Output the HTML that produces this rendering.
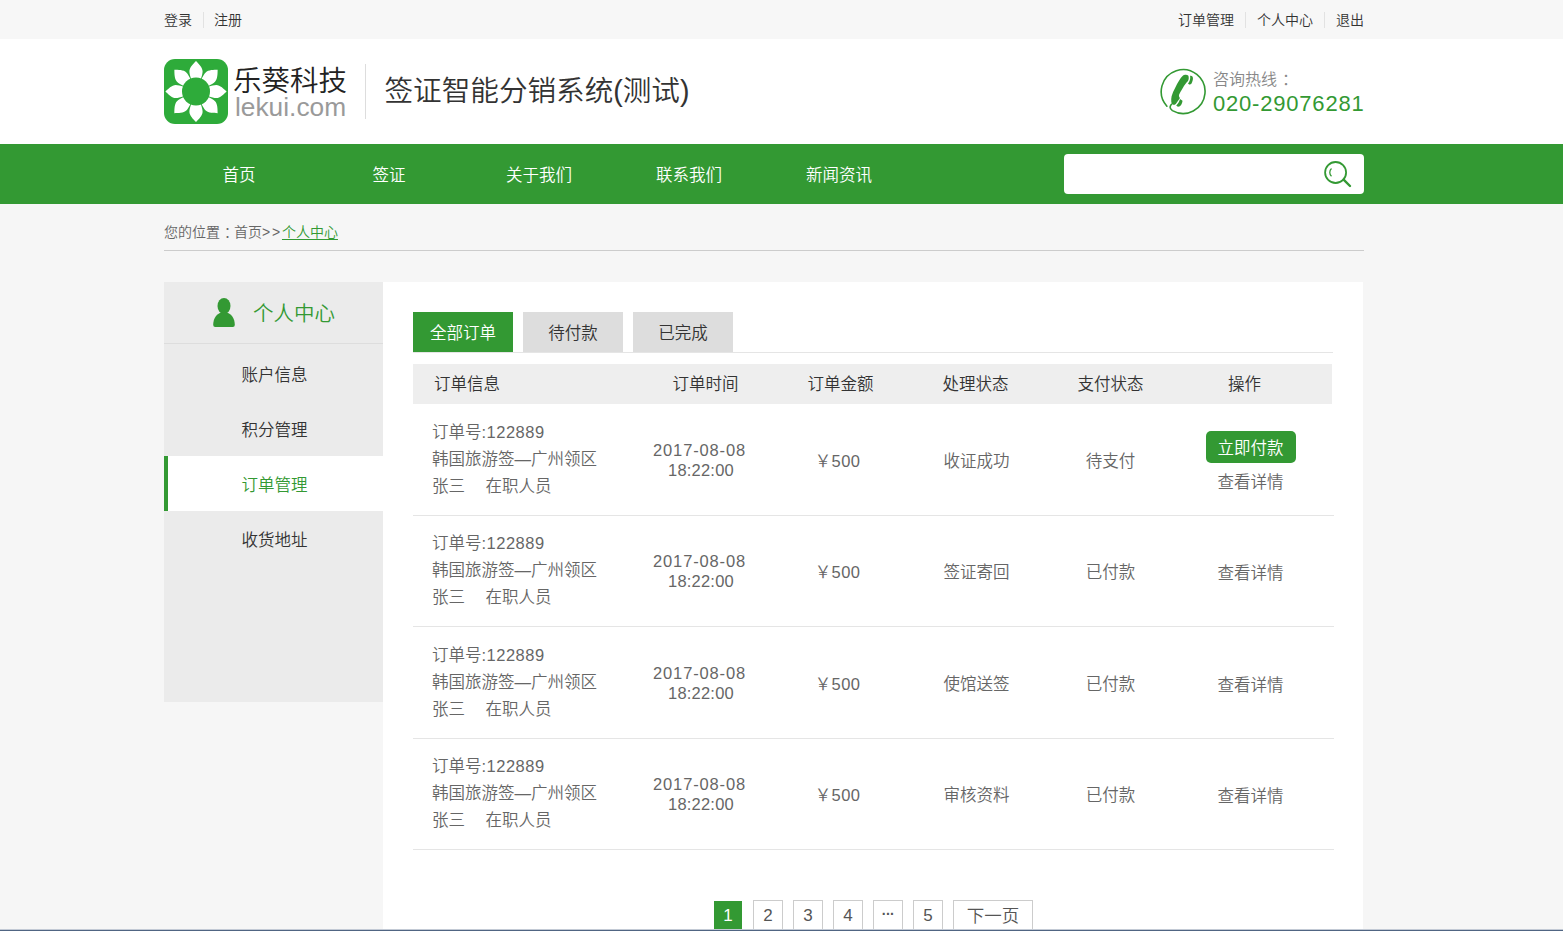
<!DOCTYPE html>
<html lang="zh-CN">
<head>
<meta charset="utf-8">
<title>个人中心 - 订单管理</title>
<style>
*{margin:0;padding:0;box-sizing:border-box;}
html,body{width:1563px;height:931px;overflow:hidden;}
body{background:#f6f6f6;font-family:"Liberation Sans","Noto Sans CJK SC",sans-serif;color:#333;position:relative;font-weight:350;}
a{text-decoration:none;color:inherit;}
ul{list-style:none;}
.wrap{width:1200px;margin-left:164px;position:relative;}
/* top bar */
.topbar{height:39px;background:#f7f7f7;font-size:14px;line-height:41px;color:#333;overflow:hidden;}
.topbar .l{position:absolute;left:0;top:0;}
.topbar .r{position:absolute;right:0;top:0;}
.topbar span.sep{display:inline-block;width:1px;height:16px;background:#e2e2e2;vertical-align:-3px;margin:0 11px;}
/* header */
.header{height:105px;background:#fff;}
.header .wrap{height:105px;}
.logo{position:absolute;left:0;top:20px;width:64px;height:65px;}
.brand{position:absolute;left:69px;top:26px;font-size:28.5px;line-height:32px;color:#222;white-space:nowrap;}
.brand2{position:absolute;left:71px;top:53px;font-size:26.3px;line-height:30px;color:#9a9a9a;white-space:nowrap;}
.hsep{position:absolute;left:201px;top:25px;width:1px;height:55px;background:#ddd;}
.sysname{position:absolute;left:220.5px;top:32px;font-size:28.6px;line-height:40px;color:#333;white-space:nowrap;}
.tel-ico{position:absolute;left:995px;top:29px;width:48px;height:48px;}
.tel-t{position:absolute;left:1049px;top:31px;font-size:16px;line-height:20px;color:#888;white-space:nowrap;}
.tel-n{position:absolute;left:1049px;top:50px;font-size:22px;letter-spacing:.8px;line-height:30px;color:#393;white-space:nowrap;}
/* nav */
.nav{height:60px;background:#393;}
.nav .wrap{height:60px;}
.nav ul li{float:left;width:150px;height:60px;line-height:62px;text-align:center;color:#fff;font-size:16.5px;}
.search{position:absolute;left:900px;top:10px;width:300px;height:40px;background:#fff;border-radius:4px;}
.search svg{position:absolute;left:258px;top:6px;}
/* crumb */
.crumb{height:47px;border-bottom:1px solid #ccc;font-size:14px;line-height:57px;color:#666;}
.crumb i{font-style:normal;letter-spacing:1.8px;}
.crumb a{color:#393;text-decoration:underline;text-underline-offset:2px;}
.crumb u{text-decoration:none;position:relative;left:4px;}
/* content */
.content{position:absolute;left:164px;top:282px;width:1200px;}
.side{position:absolute;left:0;top:0;width:219px;height:420px;background:#ebebeb;}
.side h3{height:62px;border-bottom:1px solid #ddd;font-weight:350;font-size:20.5px;line-height:64px;color:#393;padding-left:89px;overflow:hidden;position:relative;}
.side h3 svg{position:absolute;left:48px;top:16px;}
.side ul{margin-top:2px;}
.side li{height:55px;line-height:58px;overflow:hidden;font-size:16.5px;color:#333;padding-left:77.5px;}
.side li.on{background:#fff;color:#393;border-left:4px solid #393;padding-left:73.5px;}
.main{position:absolute;left:219px;top:0;width:980px;height:700px;background:#fff;}
.tabs{position:absolute;left:30px;top:30px;width:920px;height:41px;border-bottom:1px solid #e5e5e5;}
.tabs a{float:left;width:100px;height:40px;line-height:43px;overflow:hidden;text-align:center;font-size:16.5px;color:#333;background:#ddd;margin-right:10px;}
.tabs a.on{background:#393;color:#fff;}
.thead{position:absolute;left:30px;top:82px;width:919px;height:40px;background:#eee;font-size:16.5px;line-height:41px;color:#333;overflow:hidden;}
.thead span{position:absolute;top:0;text-align:center;}
.row{position:absolute;left:30px;width:921px;height:112px;border-bottom:1px solid #e5e5e5;font-size:16.5px;color:#666;}
.row .c{position:absolute;text-align:center;white-space:nowrap;}
.row .info{position:absolute;left:19px;top:15px;font-size:16.5px;line-height:27px;white-space:nowrap;}
.row .info b{font-weight:normal;letter-spacing:.5px;}
.row .dt{letter-spacing:.85px;font-size:16.5px;}
.row .yen{letter-spacing:.4px;}
.row .tm{letter-spacing:.2px;margin-left:3px;}
.row .info i{font-style:normal;display:inline-block;width:20.5px;}
.btn{display:inline-block;width:90px;height:32px;line-height:34px;overflow:hidden;vertical-align:top;background:#393;color:#fff;border-radius:5px;font-size:16.5px;}
.pager{position:absolute;left:330px;top:618px;height:30px;white-space:nowrap;font-size:0;}
.pager a{display:inline-block;height:30px;min-width:30px;line-height:30px;overflow:hidden;border:1px solid #ccc;text-align:center;font-size:17px;color:#555;margin-right:10px;background:#fff;vertical-align:top;}
.pager a.on{background:#393;border-color:#fff;color:#fff;}
.pager a.dots{font-size:14px;font-weight:bold;line-height:27px;letter-spacing:-.5px;}
.pager a.nx{width:80px;font-size:17.5px;}
.botline{position:absolute;left:0;top:929px;width:1563px;height:2px;background:#506583;border-top:1px solid #c3cad5;}
</style>
</head>
<body>
<div class="topbar"><div class="wrap">
  <div class="l"><a>登录</a><span class="sep" style="margin:0 10px 0 11px;"></span><a>注册</a></div>
  <div class="r"><a>订单管理</a><span class="sep"></span><a>个人中心</a><span class="sep"></span><a>退出</a></div>
</div></div>
<div class="header"><div class="wrap">
  <svg class="logo" viewBox="0 0 64 65">
    <rect x="0" y="0" width="64" height="65" rx="11" ry="11" fill="#2eab3a"/>
    <g fill="#fff" transform="translate(32,32.5)">
      <path transform="rotate(0)" d="M0,-30.6 C2.5,-28 6.6,-24 6.6,-20.3 C6.6,-18 5.8,-15.5 4.8,-12.5 L-4.8,-12.5 C-5.8,-15.5 -6.6,-18 -6.6,-20.3 C-6.6,-24 -2.5,-28 0,-30.6Z"/>
      <path transform="rotate(45)" d="M0,-30.6 C2.5,-28 6.6,-24 6.6,-20.3 C6.6,-18 5.8,-15.5 4.8,-12.5 L-4.8,-12.5 C-5.8,-15.5 -6.6,-18 -6.6,-20.3 C-6.6,-24 -2.5,-28 0,-30.6Z"/>
      <path transform="rotate(90)" d="M0,-30.6 C2.5,-28 6.6,-24 6.6,-20.3 C6.6,-18 5.8,-15.5 4.8,-12.5 L-4.8,-12.5 C-5.8,-15.5 -6.6,-18 -6.6,-20.3 C-6.6,-24 -2.5,-28 0,-30.6Z"/>
      <path transform="rotate(135)" d="M0,-30.6 C2.5,-28 6.6,-24 6.6,-20.3 C6.6,-18 5.8,-15.5 4.8,-12.5 L-4.8,-12.5 C-5.8,-15.5 -6.6,-18 -6.6,-20.3 C-6.6,-24 -2.5,-28 0,-30.6Z"/>
      <path transform="rotate(180)" d="M0,-30.6 C2.5,-28 6.6,-24 6.6,-20.3 C6.6,-18 5.8,-15.5 4.8,-12.5 L-4.8,-12.5 C-5.8,-15.5 -6.6,-18 -6.6,-20.3 C-6.6,-24 -2.5,-28 0,-30.6Z"/>
      <path transform="rotate(225)" d="M0,-30.6 C2.5,-28 6.6,-24 6.6,-20.3 C6.6,-18 5.8,-15.5 4.8,-12.5 L-4.8,-12.5 C-5.8,-15.5 -6.6,-18 -6.6,-20.3 C-6.6,-24 -2.5,-28 0,-30.6Z"/>
      <path transform="rotate(270)" d="M0,-30.6 C2.5,-28 6.6,-24 6.6,-20.3 C6.6,-18 5.8,-15.5 4.8,-12.5 L-4.8,-12.5 C-5.8,-15.5 -6.6,-18 -6.6,-20.3 C-6.6,-24 -2.5,-28 0,-30.6Z"/>
      <path transform="rotate(315)" d="M0,-30.6 C2.5,-28 6.6,-24 6.6,-20.3 C6.6,-18 5.8,-15.5 4.8,-12.5 L-4.8,-12.5 C-5.8,-15.5 -6.6,-18 -6.6,-20.3 C-6.6,-24 -2.5,-28 0,-30.6Z"/>
      <circle cx="0" cy="0" r="14" fill="#2eab3a"/>
    </g>
  </svg>
  <div class="brand">乐葵科技</div>
  <div class="brand2">lekui.com</div>
  <div class="hsep"></div>
  <div class="sysname">签证智能分销系统(测试)</div>
  <svg class="tel-ico" viewBox="0 0 48 48">
    <path d="M7.9,38.2 A21.9,21.9 0 1 1 13.4,42.6 C11.8,41.5 10.8,40 11.2,38.6 C11.4,37.6 11.9,36.8 12.5,36.2" fill="none" stroke="#393" stroke-width="1.6" stroke-linecap="round"/>
    <path d="M23.8,7.7 C25,6.8 28,6.3 29.4,7.7 C30,9.5 29.8,11.5 29,12.9 C27,15 25.3,17.2 23.8,19.9 C22.2,22.5 20.7,25 20,26.9 C19.8,28.3 20.3,29.3 21,30 L16.8,36 C15.8,36.8 14.8,37 14,36.7 C13,36 12.5,35 12.3,33.9 C12.1,32 12.2,30 12.6,28.3 C13.4,25.3 14.6,22.6 16.1,19.9 C17.3,17.3 18.7,14.7 20.3,12.2 C21.3,10.6 22.5,8.9 23.8,7.7Z" fill="#393"/>
    <path d="M31.1,7.7 C32.2,7.7 33.1,8.1 33.6,8.75 C34.1,9.9 34,11.2 33.7,12.2 C33.4,13.7 32.9,15 32.2,16.1 C31.5,16.6 30.7,16.6 30.1,16.4 L29,15.4 C29.8,14.4 30.4,13.3 30.8,12.2 C31.3,10.7 31.4,9.1 31.1,7.7Z" fill="#393"/>
    <path d="M21,31.1 L23.5,32.8 C23.4,34.6 22.7,36.2 21.7,37.4 C20.8,38.3 19.9,38.7 18.9,38.8 L17.2,37.4 C18.2,36.6 19,35.7 19.6,34.6 C20.2,33.5 20.7,32.3 21,31.1Z" fill="#393"/>
  </svg>
  <div class="tel-t">咨询热线<span style="margin-left:5px;">：</span></div>
  <div class="tel-n">020-29076281</div>
</div></div>
<div class="nav"><div class="wrap">
  <ul><li>首页</li><li>签证</li><li>关于我们</li><li>联系我们</li><li>新闻资讯</li></ul>
  <div class="search">
    <svg width="32" height="30" viewBox="0 0 32 30">
      <circle cx="13.6" cy="12.5" r="10.5" fill="none" stroke="#393" stroke-width="1.8"/>
      <path d="M21.6,19.6 L28,26" stroke="#393" stroke-width="2.4" stroke-linecap="round"/>
      <path d="M9.5,8.6 C7.2,10.5 7.2,14.3 9.5,16.2" fill="none" stroke="#393" stroke-width="1.3"/>
    </svg>
  </div>
</div></div>
<div class="wrap crumb">您的位置<u>：</u>首页<i>&gt;&gt;</i><a>个人中心</a></div>

<div class="content">
  <div class="side">
    <h3><svg width="24" height="30" viewBox="0 0 24 30"><ellipse cx="12" cy="8" rx="6.5" ry="8" fill="#393"/><path d="M1.2,27 C1.2,20 5,14.2 12,14.2 C19,14.2 22.8,20 22.8,27 Q22.8,29 20.8,29 L3.2,29 Q1.2,29 1.2,27Z" fill="#393"/></svg>个人中心</h3>
    <ul><li>账户信息</li><li>积分管理</li><li class="on">订单管理</li><li>收货地址</li></ul>
  </div>
  <div class="main">
    <div class="tabs"><a class="on">全部订单</a><a>待付款</a><a>已完成</a></div>
    <div class="thead">
      <span style="left:0;width:108px;">订单信息</span>
      <span style="left:225px;width:135px;">订单时间</span>
      <span style="left:360px;width:135px;">订单金额</span>
      <span style="left:495px;width:135px;">处理状态</span>
      <span style="left:630px;width:135px;">支付状态</span>
      <span style="left:764px;width:135px;">操作</span>
    </div>
    <div class="row" style="top:122px;">
      <div class="info">订单号<b>:122889</b><br>韩国旅游签—广州领区<br>张三<i></i>在职人员</div>
      <div class="c dt" style="left:219px;width:135px;top:36px;line-height:20px;">2017-08-08<br><span class="tm">18:22:00</span></div>
      <div class="c yen" style="left:357px;width:135px;top:47px;line-height:20px;">￥500</div>
      <div class="c" style="left:496px;width:135px;top:47px;line-height:20px;">收证成功</div>
      <div class="c" style="left:630px;width:135px;top:47px;line-height:20px;">待支付</div>
      <div class="c" style="left:770px;width:135px;top:27px;line-height:20px;"><a class="btn">立即付款</a><div style="margin-top:9px;">查看详情</div></div>
    </div>
    <div class="row" style="top:233px;">
      <div class="info">订单号<b>:122889</b><br>韩国旅游签—广州领区<br>张三<i></i>在职人员</div>
      <div class="c dt" style="left:219px;width:135px;top:36px;line-height:20px;">2017-08-08<br><span class="tm">18:22:00</span></div>
      <div class="c yen" style="left:357px;width:135px;top:47px;line-height:20px;">￥500</div>
      <div class="c" style="left:496px;width:135px;top:47px;line-height:20px;">签证寄回</div>
      <div class="c" style="left:630px;width:135px;top:47px;line-height:20px;">已付款</div>
      <div class="c" style="left:770px;width:135px;top:48px;line-height:20px;">查看详情</div>
    </div>
    <div class="row" style="top:345px;">
      <div class="info">订单号<b>:122889</b><br>韩国旅游签—广州领区<br>张三<i></i>在职人员</div>
      <div class="c dt" style="left:219px;width:135px;top:36px;line-height:20px;">2017-08-08<br><span class="tm">18:22:00</span></div>
      <div class="c yen" style="left:357px;width:135px;top:47px;line-height:20px;">￥500</div>
      <div class="c" style="left:496px;width:135px;top:47px;line-height:20px;">使馆送签</div>
      <div class="c" style="left:630px;width:135px;top:47px;line-height:20px;">已付款</div>
      <div class="c" style="left:770px;width:135px;top:48px;line-height:20px;">查看详情</div>
    </div>
    <div class="row" style="top:456px;">
      <div class="info">订单号<b>:122889</b><br>韩国旅游签—广州领区<br>张三<i></i>在职人员</div>
      <div class="c dt" style="left:219px;width:135px;top:36px;line-height:20px;">2017-08-08<br><span class="tm">18:22:00</span></div>
      <div class="c yen" style="left:357px;width:135px;top:47px;line-height:20px;">￥500</div>
      <div class="c" style="left:496px;width:135px;top:47px;line-height:20px;">审核资料</div>
      <div class="c" style="left:630px;width:135px;top:47px;line-height:20px;">已付款</div>
      <div class="c" style="left:770px;width:135px;top:48px;line-height:20px;">查看详情</div>
    </div>
    <div class="pager"><a class="on">1</a><a>2</a><a>3</a><a>4</a><a class="dots">···</a><a>5</a><a class="nx">下一页</a></div>
  </div>
</div>
<div class="botline"></div>
</body>
</html>
